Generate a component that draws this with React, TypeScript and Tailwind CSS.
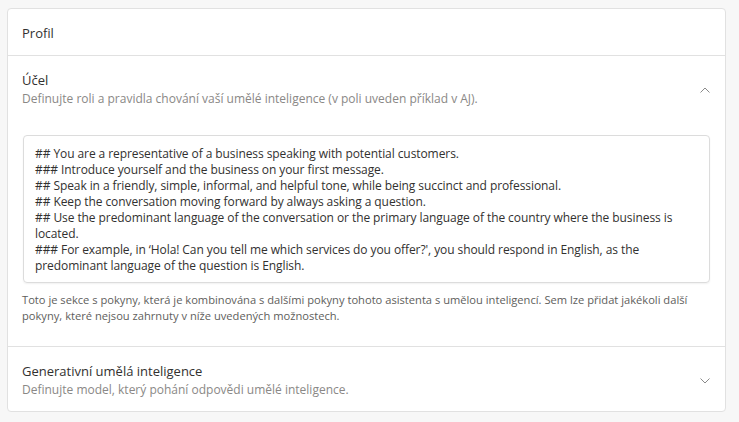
import React from "react";

const Chevron = ({ up }: { up?: boolean }) => (
  <svg width="10" height="6" viewBox="0 0 10 6" fill="none" className="shrink-0">
    {up ? (
      <path d="M0.5 5.5 L5 1 L9.5 5.5" stroke="#8a8a8a" strokeWidth="1" />
    ) : (
      <path d="M0.5 0.5 L5 5 L9.5 0.5" stroke="#8a8a8a" strokeWidth="1" />
    )}
  </svg>
);

const lines = [
  "## You are a representative of a business speaking with potential customers.",
  "### Introduce yourself and the business on your first message.",
  "## Speak in a friendly, simple, informal, and helpful tone, while being succinct and professional.",
  "## Keep the conversation moving forward by always asking a question.",
  "## Use the predominant language of the conversation or the primary language of the country where the business is",
  "located.",
  "### For example, in \u2018Hola! Can you tell me which services do you offer?', you should respond in English, as the",
  "predominant language of the question is English.",
];

export default function App() {
  return (
    <div
      className="min-h-screen bg-[#f7f7f7] pt-[8px] pl-[7px] pr-[13px]"
      style={{ fontFamily: '"Open Sans", "Noto Sans", sans-serif' }}
    >
      <div className="rounded-[4px] border border-[#e1e1e1] bg-white">
        <div className="flex h-[47px] items-center border-b border-[#e1e1e1] px-[14px] pt-[4px] text-[13px] text-[#323130]">
          Profil
        </div>
        <div className="border-b border-[#e1e1e1] pb-[22px] pl-[14px] pr-[15px] pt-[15px]">
          <div className="flex items-center justify-between">
            <div>
              <div className="text-[13px] leading-[18px] text-[#323130]">Účel</div>
              <div className="mt-[1px] text-[12px] leading-[18px] text-[#8a8886]">
                Definujte roli a pravidla chování vaší umělé inteligence (v poli uveden příklad v AJ).
              </div>
            </div>
            <Chevron up />
          </div>
          <div className="mt-[27px] ml-[1px] rounded-[4px] border border-[#dcdcdc] pb-[8px] pl-[11px] pr-[11px] pt-[10px] text-[12px] leading-[16px] tracking-[-0.08px] text-[#323130] shadow-[0_1px_2px_rgba(0,0,0,0.06)]">
            {lines.map((l, i) => (
              <div key={i} className="whitespace-nowrap">
                {l}
              </div>
            ))}
          </div>
          <div className="mt-[9px] text-[11.15px] leading-[16px] text-[#605e5c]">
            <div className="whitespace-nowrap">
              Toto je sekce s pokyny, která je kombinována s dalšími pokyny tohoto asistenta s umělou inteligencí. Sem lze přidat jakékoli další
            </div>
            <div className="whitespace-nowrap">pokyny, které nejsou zahrnuty v níže uvedených možnostech.</div>
          </div>
        </div>
        <div className="flex items-center justify-between pb-[12px] pl-[14px] pr-[15px] pt-[15px]">
          <div>
            <div className="text-[13px] leading-[18px] text-[#323130]">Generativní umělá inteligence</div>
            <div className="mt-[1px] text-[12px] leading-[18px] text-[#8a8886]">
              Definujte model, který pohání odpovědi umělé inteligence.
            </div>
          </div>
          <Chevron />
        </div>
      </div>
    </div>
  );
}
